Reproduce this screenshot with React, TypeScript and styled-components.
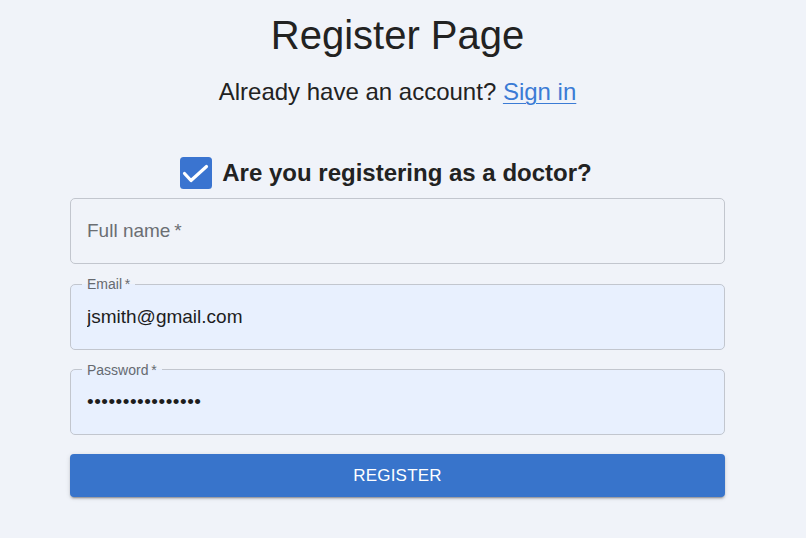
import React from "react";
import styled, { createGlobalStyle } from "styled-components";

const Global = createGlobalStyle`
  html, body {
    margin: 0;
    padding: 0;
    background: #f0f3f9;
    min-height: 100%;
  }
  body {
    font-family: "Liberation Sans", Arial, sans-serif;
    color: #222;
  }
  * { box-sizing: border-box; }
`;

const Page = styled.main`
  display: flex;
  flex-direction: column;
  align-items: center;
  padding: 11px 11px 0 0;
  min-height: 538px;
`;

const Title = styled.h1`
  margin: 0;
  font-size: 40px;
  line-height: 48px;
  font-weight: 400;
  color: #222;
`;

const Subtitle = styled.p`
  margin: 15px 0 0;
  font-size: 24px;
  line-height: 36px;
  color: #222;
`;

const SignInLink = styled.a`
  color: #3b7bd5;
  text-decoration: underline;
  text-underline-offset: 3px;
  text-decoration-thickness: 1px;
`;

const Form = styled.form`
  width: 655px;
  margin-top: 45px;
  display: flex;
  flex-direction: column;
`;

const CheckRow = styled.label`
  display: flex;
  align-items: center;
  justify-content: center;
  gap: 10px;
  height: 36px;
  margin: 0 0 7px -23px;
  font-size: 24px;
  font-weight: 700;
  color: #222;
`;

const CheckBox = styled.span`
  display: inline-flex;
  width: 32px;
  height: 32px;
  svg {
    display: block;
  }
`;

const Fields = styled.div`
  display: flex;
  flex-direction: column;
  gap: 19.5px;
`;

const Field = styled.fieldset<{ $filled?: boolean }>`
  margin: 0;
  height: 66px;
  min-width: 0;
  padding: 0 16px;
  border: 1px solid #c2c6ce;
  border-radius: 5px;
  background: ${(p) => (p.$filled ? "#e8f0fe" : "transparent")};
`;

const Legend = styled.legend`
  font-size: 14px;
  line-height: 0;
  height: 0;
  padding: 0 5px;
  margin-left: -5px;
  color: #666a70;
`;

const Input = styled.input<{ $dots?: boolean }>`
  display: block;
  border: none;
  outline: none;
  background: transparent;
  padding: 0;
  margin: 0;
  width: 100%;
  height: 64px;
  font-family: "Liberation Sans", Arial, sans-serif;
  font-size: 19px;
  color: #1d1d1d;
  letter-spacing: ${(p) => (p.$dots ? "0.5px" : "0")};
  &::placeholder {
    color: #6b6e73;
    opacity: 1;
  }
`;

const Button = styled.button`
  margin-top: 19px;
  height: 43px;
  width: 100%;
  border: none;
  border-radius: 4px;
  background: #3874cb;
  color: #fff;
  font-family: "Liberation Sans", Arial, sans-serif;
  font-size: 17px;
  letter-spacing: 0.2px;
  text-transform: uppercase;
  box-shadow: 0 3px 1px -2px rgba(0, 0, 0, 0.2), 0 2px 2px 0 rgba(0, 0, 0, 0.14),
    0 1px 5px 0 rgba(0, 0, 0, 0.12);
  cursor: pointer;
`;

export default function App() {
  return (
    <>
      <Global />
      <Page>
        <Title>Register Page</Title>
        <Subtitle>
          Already have an account? <SignInLink href="#">Sign in</SignInLink>
        </Subtitle>
        <Form onSubmit={(e) => e.preventDefault()}>
          <CheckRow>
            <CheckBox>
              <svg width="32" height="32" viewBox="0 0 32 32">
                <rect x="0" y="0" width="32" height="32" rx="3.5" fill="#3a74d0" />
                <path
                  d="M4.5 16.5 L11 23.5 L26.5 9.5"
                  fill="none"
                  stroke="#fff"
                  strokeWidth="3.2"
                  strokeLinecap="round"
                  strokeLinejoin="round"
                />
              </svg>
            </CheckBox>
            Are you registering as a doctor?
          </CheckRow>
          <Fields>
            <Field>
              <Input placeholder={"Full name\u2009*"} />
            </Field>
            <Field $filled>
              <Legend>{"Email\u2009*"}</Legend>
              <Input defaultValue="jsmith@gmail.com" />
            </Field>
            <Field $filled>
              <Legend>{"Password\u2009*"}</Legend>
              <Input $dots type="password" defaultValue="abcdefghijklmnop" />
            </Field>
          </Fields>
          <Button type="submit">Register</Button>
        </Form>
      </Page>
    </>
  );
}
